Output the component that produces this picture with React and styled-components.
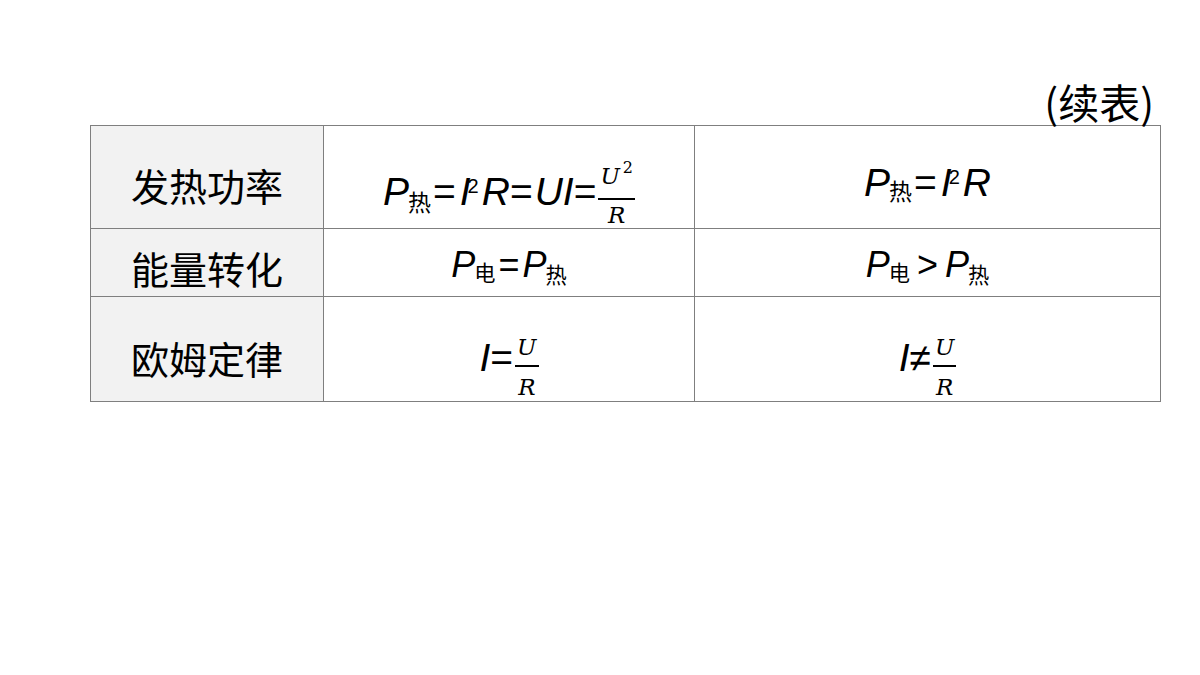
import React from 'react';
import styled, { createGlobalStyle } from 'styled-components';

const Global = createGlobalStyle`
  html, body { margin: 0; padding: 0; background: #fff; }
  body { width: 1200px; height: 675px; overflow: hidden; font-family: "Noto Sans CJK SC", "Liberation Sans", sans-serif; }
`;

const Page = styled.div`
  padding: 78px 40px 0 90px;
  width: 1070px;
`;

const Caption = styled.div`
  text-align: right;
  font-size: 41px;
  line-height: 47px;
  margin-right: 6px;
  color: #000;
`;

const Table = styled.table`
  border-collapse: collapse;
  width: 1070px;
  table-layout: fixed;
`;

const Row = styled.tr`
  height: ${p => p.h}px;
`;

const Cell = styled.td`
  border: 1.5px solid #7f7f7f;
  padding: ${p => p.pt || 0}px 0 0 0;
  text-align: center;
  vertical-align: ${p => (p.head ? 'middle' : 'top')};
  background: ${p => (p.head ? '#f2f2f2' : '#fff')};
  color: #000;
`;

const Label = styled.span`
  font-family: "Noto Sans CJK SC", sans-serif;
  font-size: 38px;
`;

const Formula = styled.span`
  display: inline-block;
  font-family: "Liberation Sans", "Noto Sans CJK SC", sans-serif;
  font-size: ${p => p.fs || 39}px;
  line-height: 44px;
  white-space: nowrap;
`;

const V = styled.i`
  font-style: italic;
  margin-left: ${p => p.ml || 0}px;
`;

const Sub = styled.span`
  font-family: "Noto Sans CJK SC", sans-serif;
  font-style: normal;
  font-size: 0.59em;
  line-height: 0;
  position: relative;
  top: ${p => p.dy || 0.2}em;
  margin-left: -1px;
`;

const Sup = styled.span`
  font-size: 20px;
  line-height: 0;
  position: relative;
  top: -12px;
  margin-left: -3px;
  margin-right: 3px;
`;

const Op = styled.span`
  margin: 0 ${p => p.m ?? 1}px;
`;

const Frac = styled.span`
  display: inline-flex;
  flex-direction: column;
  align-items: stretch;
  text-align: center;
  font-family: "DejaVu Serif", "Liberation Serif", serif;
  font-style: italic;
  font-size: 23px;
  line-height: 28px;
  vertical-align: middle;
  margin: 0 0 -12px 2px;
  position: relative;
  top: ${p => p.top || 0}px;
`;

const Num = styled.span`
  padding: 0 2px ${p => p.pb}px;
  border-bottom: 2px solid #000;
  sup { font-style: normal; font-size: 16px; line-height: 0; position: relative; top: -2px; margin-left: 3px; }
`;

const Den = styled.span`
  padding-top: ${p => p.pt}px;
`;

function FracUR({ sq, top }) {
  return (
    <Frac top={top}>
      <Num pb={sq ? 8 : 4}>U{sq && <sup>2</sup>}</Num>
      <Den pt={sq ? 1 : 6}>R</Den>
    </Frac>
  );
}

export default function App() {
  return (
    <Page>
      <Global />
      <Caption>(续表)</Caption>
      <Table>
        <colgroup>
          <col style={{ width: 233 }} />
          <col style={{ width: 371 }} />
          <col style={{ width: 466 }} />
        </colgroup>
        <tbody>
          <Row h={103}>
            <Cell head pt={14}><Label>发热功率</Label></Cell>
            <Cell pt={41}>
              <Formula>
                <V>P</V><Sub dy={0.26}>热</Sub><Op m={2}>=</Op><V ml={2}>I</V><Sup>2</Sup><V>R</V>
                <Op m={0}>=</Op><V ml={2}>UI</V><Op m={0}>=</Op>
                <FracUR sq top={-5} />
              </Formula>
            </Cell>
            <Cell pt={35}>
              <Formula>
                <V>P</V><Sub dy={0.18}>热</Sub><Op m={2}>=</Op><V ml={2}>I</V><Sup>2</Sup><V>R</V>
              </Formula>
            </Cell>
          </Row>
          <Row h={68}>
            <Cell head pt={10}><Label>能量转化</Label></Cell>
            <Cell pt={14}>
              <Formula fs={36}>
                <V>P</V><Sub>电</Sub><Op m={3}>=</Op><V>P</V><Sub dy={0.26}>热</Sub>
              </Formula>
            </Cell>
            <Cell pt={14}>
              <Formula fs={36}>
                <V>P</V><Sub>电</Sub><Op m={7}>&gt;</Op><V>P</V><Sub dy={0.26}>热</Sub>
              </Formula>
            </Cell>
          </Row>
          <Row h={105}>
            <Cell head pt={16}><Label>欧姆定律</Label></Cell>
            <Cell pt={36}>
              <Formula>
                <V>I</V><Op m={0}>=</Op><FracUR />
              </Formula>
            </Cell>
            <Cell pt={36}>
              <Formula>
                <V>I</V><Op m={0}>≠</Op><FracUR />
              </Formula>
            </Cell>
          </Row>
        </tbody>
      </Table>
    </Page>
  );
}
